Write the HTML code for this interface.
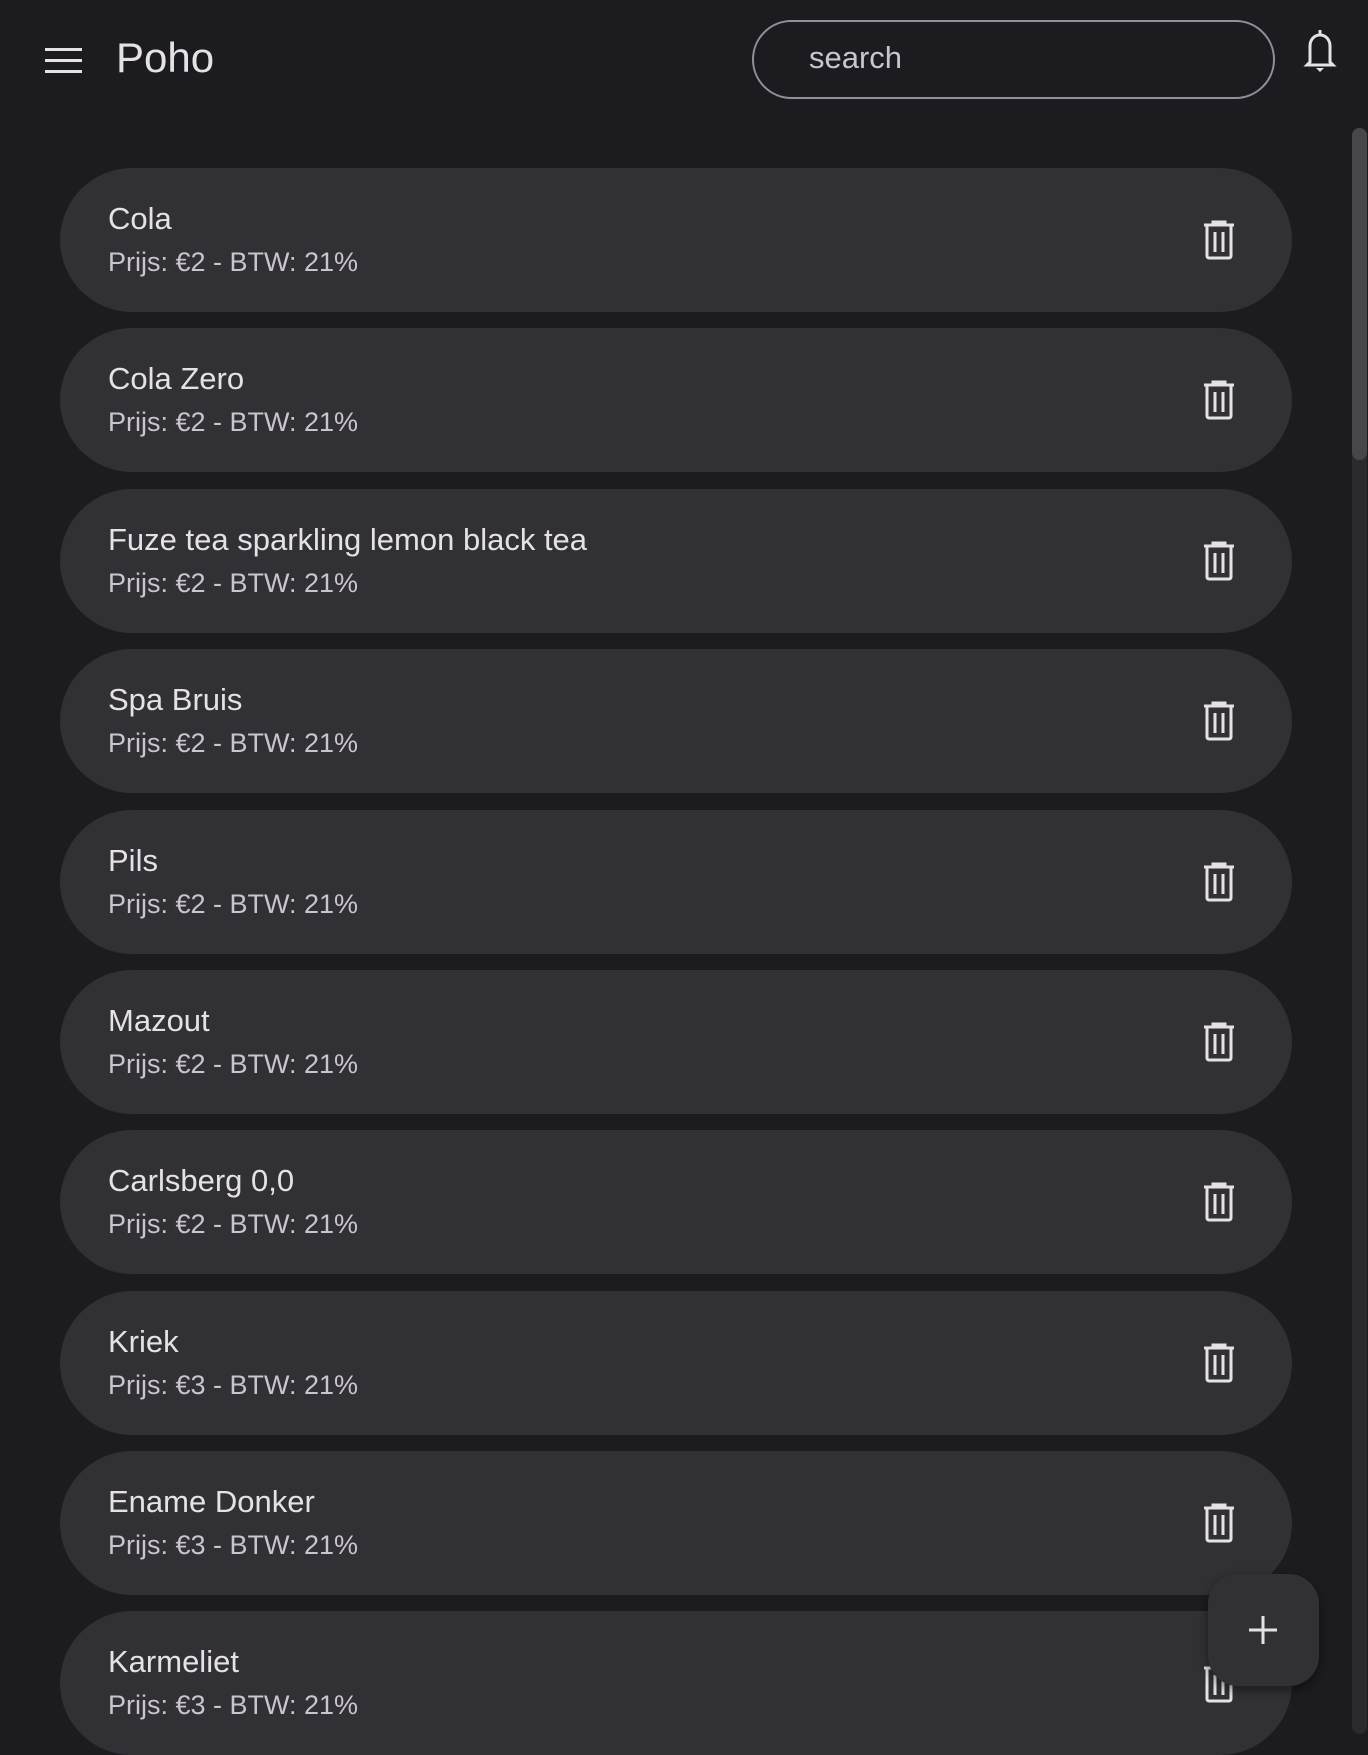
<!DOCTYPE html>
<html><head><meta charset="utf-8"><style>
*{margin:0;padding:0;box-sizing:border-box}
body{width:1368px;height:1734px;background:#1c1b20;font-family:"Liberation Sans",sans-serif;overflow:hidden;position:relative;color:#e6e1e6}
.hb{position:absolute;left:45px;top:48px;width:37px}
.hb i{display:block;height:3px;background:#e6e1e6;margin-bottom:8px}
.logo{position:absolute;left:116px;top:34px;font-size:42px;color:#e6e1e6}
.search{position:absolute;left:752px;top:20px;width:523px;height:79px;border:2px solid #938f96;border-radius:40px;font-size:31px;color:#cac5cc;padding:18px 0 0 55px}
.bell{position:absolute;left:1302px;top:28px}
.sb{position:absolute;left:1352px;top:128px;width:15px;height:1606px;background:#2b2a2f;border-radius:8px}
.sb i{display:block;height:332px;background:#47464b;border-radius:8px}
.card{position:absolute;left:60px;width:1232px;height:144px;background:#313035;border-radius:72px}
.t{position:absolute;left:48px;top:33px;font-size:31px;color:#e6e1e6}
.s{position:absolute;left:48px;top:79px;font-size:27px;color:#cac5cc}
.tr{position:absolute;left:1142px;top:52px}
.fab{position:absolute;left:1208px;top:1574px;width:111px;height:112px;background:#313035;border-radius:30px;box-shadow:0 4px 10px rgba(0,0,0,.45)}
</style></head><body>
<div class="hb"><i></i><i></i><i></i></div>
<div class="logo">Poho</div>
<div class="search">search</div>
<svg class="bell" width="36" height="44" viewBox="0 0 36 44"><path d="M18 2v4M8 34V18c0-6 4-11 10-11s10 5 10 11v16l3 3H5z" fill="none" stroke="#e6e1e6" stroke-width="3"/><path d="M14 40h8l-4 4z" fill="#e6e1e6"/></svg>
<div class="sb"><i></i></div>

<div class="card" style="top:168px"><div class="t">Cola</div><div class="s">Prijs: €2 - BTW: 21%</div><svg class="tr" width="34" height="40" viewBox="0 0 34 40"><path d="M2 5h30M11 5V2h12v3M5 6v30a2 2 0 0 0 2 2h20a2 2 0 0 0 2-2V6M13 12v20M21 12v20" fill="none" stroke="#e6e1e6" stroke-width="3"/></svg></div>
<div class="card" style="top:328px"><div class="t">Cola Zero</div><div class="s">Prijs: €2 - BTW: 21%</div><svg class="tr" width="34" height="40" viewBox="0 0 34 40"><path d="M2 5h30M11 5V2h12v3M5 6v30a2 2 0 0 0 2 2h20a2 2 0 0 0 2-2V6M13 12v20M21 12v20" fill="none" stroke="#e6e1e6" stroke-width="3"/></svg></div>
<div class="card" style="top:489px"><div class="t">Fuze tea sparkling lemon black tea</div><div class="s">Prijs: €2 - BTW: 21%</div><svg class="tr" width="34" height="40" viewBox="0 0 34 40"><path d="M2 5h30M11 5V2h12v3M5 6v30a2 2 0 0 0 2 2h20a2 2 0 0 0 2-2V6M13 12v20M21 12v20" fill="none" stroke="#e6e1e6" stroke-width="3"/></svg></div>
<div class="card" style="top:649px"><div class="t">Spa Bruis</div><div class="s">Prijs: €2 - BTW: 21%</div><svg class="tr" width="34" height="40" viewBox="0 0 34 40"><path d="M2 5h30M11 5V2h12v3M5 6v30a2 2 0 0 0 2 2h20a2 2 0 0 0 2-2V6M13 12v20M21 12v20" fill="none" stroke="#e6e1e6" stroke-width="3"/></svg></div>
<div class="card" style="top:810px"><div class="t">Pils</div><div class="s">Prijs: €2 - BTW: 21%</div><svg class="tr" width="34" height="40" viewBox="0 0 34 40"><path d="M2 5h30M11 5V2h12v3M5 6v30a2 2 0 0 0 2 2h20a2 2 0 0 0 2-2V6M13 12v20M21 12v20" fill="none" stroke="#e6e1e6" stroke-width="3"/></svg></div>
<div class="card" style="top:970px"><div class="t">Mazout</div><div class="s">Prijs: €2 - BTW: 21%</div><svg class="tr" width="34" height="40" viewBox="0 0 34 40"><path d="M2 5h30M11 5V2h12v3M5 6v30a2 2 0 0 0 2 2h20a2 2 0 0 0 2-2V6M13 12v20M21 12v20" fill="none" stroke="#e6e1e6" stroke-width="3"/></svg></div>
<div class="card" style="top:1130px"><div class="t">Carlsberg 0,0</div><div class="s">Prijs: €2 - BTW: 21%</div><svg class="tr" width="34" height="40" viewBox="0 0 34 40"><path d="M2 5h30M11 5V2h12v3M5 6v30a2 2 0 0 0 2 2h20a2 2 0 0 0 2-2V6M13 12v20M21 12v20" fill="none" stroke="#e6e1e6" stroke-width="3"/></svg></div>
<div class="card" style="top:1291px"><div class="t">Kriek</div><div class="s">Prijs: €3 - BTW: 21%</div><svg class="tr" width="34" height="40" viewBox="0 0 34 40"><path d="M2 5h30M11 5V2h12v3M5 6v30a2 2 0 0 0 2 2h20a2 2 0 0 0 2-2V6M13 12v20M21 12v20" fill="none" stroke="#e6e1e6" stroke-width="3"/></svg></div>
<div class="card" style="top:1451px"><div class="t">Ename Donker</div><div class="s">Prijs: €3 - BTW: 21%</div><svg class="tr" width="34" height="40" viewBox="0 0 34 40"><path d="M2 5h30M11 5V2h12v3M5 6v30a2 2 0 0 0 2 2h20a2 2 0 0 0 2-2V6M13 12v20M21 12v20" fill="none" stroke="#e6e1e6" stroke-width="3"/></svg></div>
<div class="card" style="top:1611px"><div class="t">Karmeliet</div><div class="s">Prijs: €3 - BTW: 21%</div><svg class="tr" width="34" height="40" viewBox="0 0 34 40"><path d="M2 5h30M11 5V2h12v3M5 6v30a2 2 0 0 0 2 2h20a2 2 0 0 0 2-2V6M13 12v20M21 12v20" fill="none" stroke="#e6e1e6" stroke-width="3"/></svg></div>

<div class="fab"><svg width="111" height="112" viewBox="0 0 111 112"><path d="M41 56h28M55 42v28" stroke="#e6e1e6" stroke-width="3"/></svg></div>
</body></html>
